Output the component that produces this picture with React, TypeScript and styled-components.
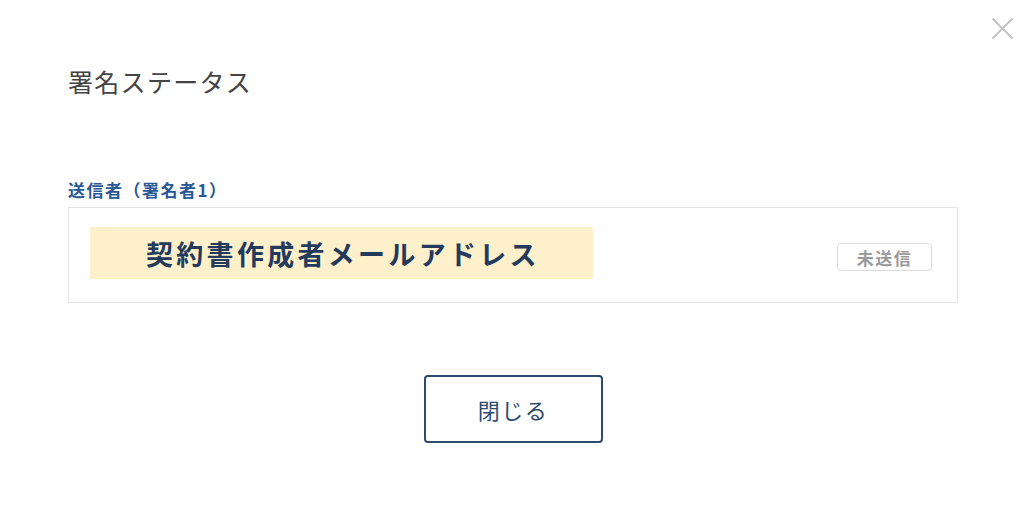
import React from "react";
import styled, { createGlobalStyle } from "styled-components";

const Global = createGlobalStyle`
  html, body { margin: 0; padding: 0; background: #ffffff; }
  body { font-family: "Noto Sans CJK JP", "Noto Sans", sans-serif; }
  * { box-sizing: border-box; }
`;

const Dialog = styled.div`
  position: relative;
  width: 1023px;
  height: 506px;
  padding: 66px 65px 0 68px;
  display: flex;
  flex-direction: column;
`;

const Title = styled.h1`
  margin: 0;
  font-size: 25px;
  line-height: 30px;
  font-weight: 400;
  letter-spacing: 1.3px;
  color: #444444;
`;

const CloseButton = styled.button`
  position: absolute;
  top: 15px;
  right: 8px;
  width: 26px;
  height: 26px;
  padding: 0;
  border: none;
  background: transparent;
  display: flex;
  align-items: center;
  justify-content: center;
`;

const Label = styled.div`
  margin-top: 82px;
  font-size: 17px;
  line-height: 24px;
  font-weight: 700;
  letter-spacing: 1.5px;
  color: #2a5896;
`;

const SignerBox = styled.div`
  margin-top: 5px;
  height: 96px;
  border: 1px solid #e3e3e3;
  padding: 19px 25px 23px 21px;
  display: flex;
  align-items: center;
  justify-content: space-between;
`;

const Highlight = styled.div`
  height: 52px;
  width: 503px;
  background: #fdf0cb;
  display: flex;
  align-items: center;
  padding-left: 56px;
  font-size: 27px;
  font-weight: 700;
  letter-spacing: 3.3px;
  color: #243a5c;
  white-space: nowrap;
`;

const Badge = styled.span`
  width: 95px;
  height: 28px;
  border: 1px solid #dddddd;
  border-radius: 4px;
  display: flex;
  align-items: center;
  justify-content: center;
  font-size: 17px;
  font-weight: 700;
  letter-spacing: 1.5px;
  color: #9a9a9a;
  margin-top: 8px;
`;

const Footer = styled.div`
  margin-top: 72px;
  display: flex;
  justify-content: center;
`;

const CloseAction = styled.button`
  width: 179px;
  height: 68px;
  border: 2px solid #2e4a6e;
  border-radius: 4px;
  background: #ffffff;
  font-family: "Noto Sans CJK JP", "Noto Sans", sans-serif;
  font-size: 22px;
  letter-spacing: 1.5px;
  color: #2e4a6e;
  display: flex;
  align-items: center;
  justify-content: center;
`;

export default function App() {
  return (
    <>
      <Global />
      <Dialog>
        <CloseButton aria-label="閉じる">
          <svg width="23" height="23" viewBox="0 0 23 23">
            <path d="M1.5 1.5 L21.5 21.5 M21.5 1.5 L1.5 21.5" stroke="#c4c4c4" strokeWidth="2" fill="none" />
          </svg>
        </CloseButton>
        <Title>署名ステータス</Title>
        <Label>送信者（署名者1）</Label>
        <SignerBox>
          <Highlight>契約書作成者メールアドレス</Highlight>
          <Badge>未送信</Badge>
        </SignerBox>
        <Footer>
          <CloseAction>閉じる</CloseAction>
        </Footer>
      </Dialog>
    </>
  );
}
